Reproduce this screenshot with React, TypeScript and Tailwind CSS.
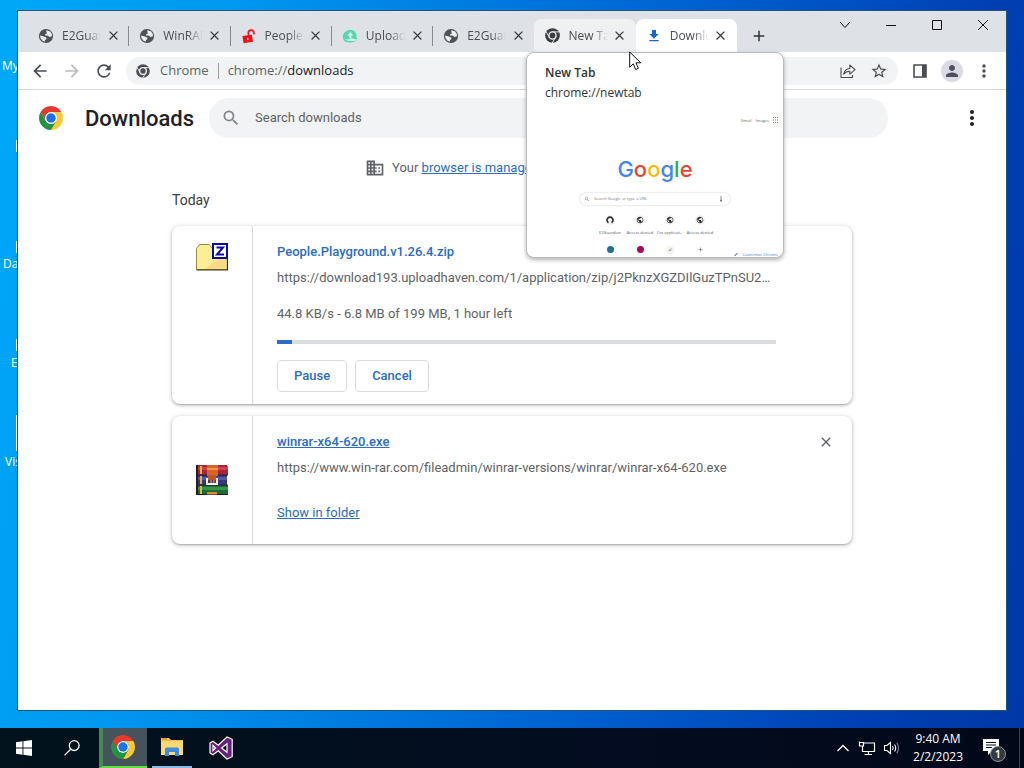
import React from "react";
import {
  MdArrowBack,
  MdArrowForward,
  MdRefresh,
  MdSearch,
  MdDomain,
  MdPerson,
  MdMoreVert,
  MdStarBorder,
  MdPublic,
  MdFileDownload,
  MdClose,
  MdAdd,
} from "react-icons/md";

const UI = "font-['Open_Sans','Noto_Sans',sans-serif]";

function ChromeLogo({ className }: { className?: string }) {
  return (
    <svg viewBox="0 0 48 48" className={className} aria-hidden="true">
      <circle cx="24" cy="24" r="12" fill="#fff" />
      <path fill="#e33b2e" d="M24 12H44.78A24 24 0 0 0 3.22 12L13.6 30A12 12 0 0 1 24 12Z" />
      <path fill="#fcc934" d="M34.4 30L24 48A24 24 0 0 0 44.78 12H24A12 12 0 0 1 34.4 30Z" />
      <path fill="#229342" d="M13.6 30L3.22 12A24 24 0 0 0 24 48L34.4 30A12 12 0 0 1 13.6 30Z" />
      <circle cx="24" cy="24" r="9.5" fill="#1a73e8" />
    </svg>
  );
}

function MonoChromeLogo({ className }: { className?: string }) {
  return (
    <svg viewBox="0 0 48 48" className={className} aria-hidden="true">
      <circle cx="24" cy="24" r="23.5" fill="currentColor" />
      <path d="M24 12.5H46M14 29.8L3 11M34 29.8L23 48" stroke="#f1f3f4" strokeWidth="3" fill="none" />
      <circle cx="24" cy="24" r="11.5" fill="currentColor" stroke="#f1f3f4" strokeWidth="4.5" />
    </svg>
  );
}

function GlobeIcon() {
  return (
    <svg viewBox="0 0 16 16" className="size-4" aria-hidden="true">
      <circle cx="8" cy="8" r="7.1" fill="#4f5256" />
      <path d="M8.6 2.3L12.3 3.4L14 6.6L13.6 8.4L11.4 8.9L9.8 7.5L7.6 7.8L7 6.4L9 5.2L8.2 3.8Z" fill="#eceef0" />
      <path d="M2.1 7.4L5.2 8.2L7.8 9.2L8.6 10.8L7 12.2L6.6 13.7L4.2 12.5L2.4 10.1Z" fill="#eceef0" />
    </svg>
  );
}

function UnlockIcon() {
  return (
    <svg viewBox="0 0 16 16" className="size-4" aria-hidden="true">
      <path d="M7.6 7.6L7.3 4.6A2.8 2.8 0 0 1 12.8 4.2L13.2 6.4" fill="none" stroke="#ee1018" strokeWidth="1.7" />
      <path d="M1.4 8.1L10.8 6.7L12 13.8L2.6 15.2Z" fill="#ee1018" />
      <path d="M6.1 9.8L7.1 9.6L7.5 12L6.5 12.2Z" fill="#fff" />
    </svg>
  );
}

function UploadHavenIcon() {
  return (
    <svg viewBox="0 0 16 16" className="size-4" aria-hidden="true">
      <path d="M2 13Q-.5 8 2.5 4.5Q6 .8 11 2.2Q14.5 4 14.4 8L15 11.5Q13 14.6 8 14.4Q4 14.4 2 13Z" fill="#54d8ae" />
      <path d="M8.4 4L11.2 7.4H9.4V10.6H7.4V7.4H5.6Z" fill="#eafff7" />
      <path d="M2 10.5Q6 12.8 9.5 10.2L15 11.5Q13 14 8.5 12.8Q4.5 13.4 2 10.5Z" fill="#c9f6e7" />
    </svg>
  );
}

type TabInfo = { title: string; icon: React.ReactNode; state?: "hover" | "active"; divider?: boolean };

const tabs: TabInfo[] = [
  { title: "E2Guardian", icon: <GlobeIcon />, divider: true },
  { title: "WinRAR download", icon: <GlobeIcon />, divider: true },
  { title: "People Playground", icon: <UnlockIcon />, divider: true },
  { title: "UploadHaven", icon: <UploadHavenIcon />, divider: true },
  { title: "E2Guardian", icon: <GlobeIcon /> },
  { title: "New Tab", icon: <MonoChromeLogo className="size-[15px] text-[#3a3d41]" />, state: "hover" },
  { title: "Downloads", icon: <MdFileDownload className="size-[18px] text-[#1a66d6]" />, state: "active" },
];

function Tab({ tab }: { tab: TabInfo }) {
  const shade =
    tab.state === "active" ? "bg-white rounded-t-lg" : tab.state === "hover" ? "bg-[#eef0f1] rounded-t-lg" : "";
  return (
    <div className={`relative flex min-w-0 flex-1 items-center pl-[10px] pr-2 ${shade}`}>
      <span className="flex w-4 shrink-0 justify-center">{tab.icon}</span>
      <span className="ml-2 min-w-0 flex-1 overflow-hidden whitespace-nowrap text-[12px] text-[#4a4d51] [mask-image:linear-gradient(to_right,black_60%,transparent)]">
        {tab.title}
      </span>
      <button aria-label={`Close ${tab.title}`} className="ml-1 flex size-4 shrink-0 items-center justify-center text-[#3c4043]">
        <MdClose className="size-[15px]" />
      </button>
      {tab.divider && <span className="absolute right-0 h-5 w-px bg-[#86898d]" />}
    </div>
  );
}

function TabStrip() {
  return (
    <header className="flex h-[41px] shrink-0 justify-between bg-[#dee1e6]">
      <div className="flex min-w-0 pl-[10px] pt-2">
        <div className="flex w-[709px] min-w-0">
          {tabs.map((t, i) => (
            <Tab key={i} tab={t} />
          ))}
        </div>
        <button aria-label="New tab" className="ml-3 flex w-5 items-center justify-center text-[#303337]">
          <MdAdd className="size-[18px]" />
        </button>
      </div>
      <div className="flex h-7 text-[#111]">
        <button aria-label="Search tabs" className="flex w-[46px] items-center justify-center">
          <svg viewBox="0 0 12 12" className="size-3"><path d="M1 3L6 8.5L11 3" fill="none" stroke="currentColor" /></svg>
        </button>
        <button aria-label="Minimize" className="flex w-[46px] items-center justify-center">
          <svg viewBox="0 0 12 12" className="size-3"><path d="M1 6.5H11" stroke="currentColor" /></svg>
        </button>
        <button aria-label="Maximize" className="flex w-[46px] items-center justify-center">
          <svg viewBox="0 0 12 12" className="size-3"><path d="M1.5 1.5H10.5V10.5H1.5Z" fill="none" stroke="currentColor" /></svg>
        </button>
        <button aria-label="Close" className="flex w-[46px] items-center justify-center">
          <svg viewBox="0 0 12 12" className="size-3"><path d="M1 1L11 11M11 1L1 11" stroke="currentColor" /></svg>
        </button>
      </div>
    </header>
  );
}

function Toolbar() {
  return (
    <div className="flex h-[38px] shrink-0 items-center border-b border-[#d6d8db] bg-white pl-3 pr-3 text-[#4a4d51]">
      <div className="flex gap-3">
        <button aria-label="Back"><MdArrowBack className="size-5" /></button>
        <button aria-label="Forward" className="text-[#babcbe]"><MdArrowForward className="size-5" /></button>
        <button aria-label="Reload"><MdRefresh className="size-5" /></button>
      </div>
      <div className="ml-3 flex h-7 min-w-0 flex-1 items-center rounded-full bg-[#f1f3f4] px-[10px]">
        <MonoChromeLogo className="size-[14px] shrink-0" />
        <span className="ml-[10px] text-[13px] text-[#5f6368]">Chrome</span>
        <span className="mx-[9px] h-4 w-px bg-[#9a9da1]" />
        <span className="flex-1 text-[13px] text-[#5f6368]">
          chrome://<span className="text-[#202124]">downloads</span>
        </span>
        <button aria-label="Share this page" className="mr-[14px]">
          <svg viewBox="0 0 16 16" className="size-4" fill="none" stroke="currentColor" strokeWidth="1.1">
            <path d="M1 4.5V14.5H12.5V12M3.8 11.2C4.3 7.6 6.4 5.6 9.8 5.5V2L15 6.7L9.8 11.2V8.2C7 8.2 5.2 9.1 3.8 11.2Z" strokeLinejoin="round" />
          </svg>
        </button>
        <button aria-label="Bookmark this tab"><MdStarBorder className="size-[18px]" /></button>
      </div>
      <button aria-label="Side panel" className="ml-[15px]">
        <svg viewBox="0 0 14 14" className="size-[14px]"><path d="M1 1H13V13H1Z" fill="none" stroke="currentColor" strokeWidth="1.6" /><path d="M9 1H13V13H9Z" fill="currentColor" /></svg>
      </button>
      <button aria-label="Profile" className="ml-[14px] flex size-[22px] items-center justify-center rounded-full bg-[#d9dae3] text-[#4b4f60]">
        <MdPerson className="size-[18px]" />
      </button>
      <button aria-label="Customize and control" className="ml-[11px]"><MdMoreVert className="size-5" /></button>
    </div>
  );
}

function ZipIcon() {
  return (
    <svg viewBox="0 0 32 32" className="size-8" aria-hidden="true">
      <path d="M.5 27.5V6.5L3.5 2.5H13L16.5 6.5H31.5V27.5Z" fill="#fbee94" stroke="#9b8a45" />
      <path d="M8 27L31 11V27Z" fill="#f7cf7a" opacity=".6" />
      <path d="M.5 28H31.5V10" fill="none" stroke="#3a3010" strokeWidth="1.2" />
      <path d="M17 2H31V16H17Z" fill="#fff" stroke="#0a0aa8" strokeWidth="2" />
      <path d="M20.5 5.5H27L21 12.5H28" fill="none" stroke="#0a0aa8" strokeWidth="2" />
    </svg>
  );
}

function WinrarIcon() {
  return (
    <svg viewBox="0 0 32 32" className="size-8" aria-hidden="true">
      <path d="M1 1H31L32 3V11H1Z" fill="#a8263a" />
      <path d="M1 3H32V6H1Z" fill="#cf3f50" />
      <path d="M0 11H31V21H0Z" fill="#34387f" />
      <path d="M0 13H31V16H0Z" fill="#5257a8" />
      <path d="M1 21H32V31H1Z" fill="#1c6a34" />
      <path d="M1 23H32V26H1Z" fill="#35934a" />
      <path d="M1 10.5H32V11.5H1ZM1 20.5H32V21.5H1ZM1 30H32V31H1Z" fill="#241a38" />
      <path d="M0 1H2V31H0Z" fill="#2c1b2c" />
      <path d="M4 2H6V10H4ZM4 12H6V20H4ZM4 22H6V30H4Z" fill="#e8b33f" />
      <path d="M11 1H22V12H11Z" fill="#d5662a" />
      <path d="M11 4H22V6H11Z" fill="#f09445" />
      <path d="M10 14H12V19H14V16H15.500V19H17.500V16H19V19H20V14H22V21H10Z" fill="#f5efe6" />
      <path d="M12 11H20V16H19V19H17.500V15.500H15.500V19H14V16H12Z" fill="#c4571f" />
      <path d="M11 28H21V30.500H11Z" fill="#e08a2e" />
    </svg>
  );
}

function DownloadCard({ icon, children }: { icon: React.ReactNode; children: React.ReactNode }) {
  return (
    <article className="flex rounded-lg bg-white shadow-[0_1px_2px_rgba(60,64,67,0.35),0_1px_4px_1px_rgba(60,64,67,0.18)]">
      <div className="flex w-[81px] shrink-0 justify-center border-r border-[#d9d9d9]">{icon}</div>
      <div className="relative min-w-0 flex-1 pl-6 pr-[76px] text-[13px] leading-5">{children}</div>
    </article>
  );
}

function DownloadsPage() {
  return (
    <main className="min-h-0 flex-1 bg-white font-['Roboto',sans-serif] text-[#5f6368]">
      <div className="flex h-14 items-center pl-[21px] pr-[22px]">
        <ChromeLogo className="size-6 shrink-0" />
        <h1 className="ml-[22px] text-[22px] font-medium text-[#202124]">Downloads</h1>
        <label className="ml-[15px] flex h-10 w-[679px] min-w-0 items-center rounded-full bg-[#f1f3f4] pl-3">
          <MdSearch className="size-5 shrink-0 text-[#80868b]" />
          <input
            type="search"
            aria-label="Search downloads"
            placeholder="Search downloads"
            className="ml-[14px] min-w-0 flex-1 bg-transparent text-[13px] outline-none placeholder:text-[#5f6368]"
          />
        </label>
        <button aria-label="More actions" className="ml-auto text-[#202124]"><MdMoreVert className="size-6" /></button>
      </div>
      <div className="mx-auto w-full max-w-[680px]">
        <p className="flex items-center justify-center pt-3 text-[13px] leading-5">
          <MdDomain className="mr-[7px] size-5" />
          <span>
            Your <a href="#managed" className="text-[#2a6cc8] underline">browser is managed</a> by your organization
          </span>
        </p>
        <h2 className="mb-4 mt-3 text-[14px] leading-5 text-[#3c4043]">Today</h2>
        <div className="flex flex-col gap-3">
          <DownloadCard icon={<div className="pt-4"><ZipIcon /></div>}>
            <div className="pb-3 pt-4">
              <h3 className="font-medium text-[#2a6cc8]">People.Playground.v1.26.4.zip</h3>
              <p className="mt-[6px] truncate">
                https://download193.uploadhaven.com/1/application/zip/j2PknzXGZDIlGuzTPnSU2TqLwe8RcVb/file
              </p>
              <p className="mt-4">44.8 KB/s - 6.8 MB of 199 MB, 1 hour left</p>
              <div className="mt-4 h-1 bg-[#dadce0]" role="progressbar" aria-valuenow={3} aria-label="Download progress">
                <div className="h-1 w-[3%] bg-[#2a6cc8]" />
              </div>
              <div className="mt-4 flex gap-2 font-medium text-[#2a6cc8]">
                <button className="h-8 rounded border border-[#dadce0] px-4">Pause</button>
                <button className="h-8 rounded border border-[#dadce0] px-4">Cancel</button>
              </div>
            </div>
          </DownloadCard>
          <DownloadCard icon={<div className="flex items-center"><WinrarIcon /></div>}>
            <div className="pb-[21px] pt-4">
              <a href="#winrar" className="font-medium text-[#2a6cc8] underline">winrar-x64-620.exe</a>
              <p className="mt-[6px]">https://www.win-rar.com/fileadmin/winrar-versions/winrar/winrar-x64-620.exe</p>
              <a href="#folder" className="mt-[25px] inline-block text-[#2a6cc8] underline">Show in folder</a>
              <button aria-label="Remove from list" className="absolute right-[18px] top-[18px]">
                <MdClose className="size-4" />
              </button>
            </div>
          </DownloadCard>
        </div>
      </div>
    </main>
  );
}

const shortcuts = [
  { label: "E2Guardian", glyph: "ring" },
  { label: "Access denied", glyph: "globe" },
  { label: "Crx applicati…", glyph: "globe" },
  { label: "Access denied", glyph: "globe" },
];

function TabPreview() {
  return (
    <div className="absolute left-[526px] top-[52px] h-[206px] w-[258px] overflow-hidden rounded-lg border border-[#b9bbbe] bg-white text-[12px] text-[#303336] shadow-[0_2px_4px_rgba(0,0,0,0.3)]">
      <p className="mt-[10px] pl-[18px] font-semibold leading-5">New Tab</p>
      <p className="pl-[18px] leading-5">chrome://newtab</p>
      <div className="mt-[14px] flex justify-end gap-1 pr-1 text-[4px] leading-[8px] text-[#666]">
        <span>Gmail</span>
        <span>Images</span>
        <svg viewBox="0 0 6 6" className="size-[6px]"><path d="M0 .5H6M0 3H6M0 5.5H6" stroke="#777" strokeDasharray="1 1" /></svg>
      </div>
      <p className="mt-7 text-center font-['Inter',sans-serif] text-[22px] font-medium leading-8">
        <span className="text-[#4285f4]">G</span>
        <span className="text-[#ea4335]">o</span>
        <span className="text-[#fbbc05]">o</span>
        <span className="text-[#4285f4]">g</span>
        <span className="text-[#34a853]">l</span>
        <span className="text-[#ea4335]">e</span>
      </p>
      <div className="mx-auto mt-2 flex h-3 w-[150px] items-center rounded-full px-1 text-[4px] text-[#777] shadow-[0_0_2px_rgba(0,0,0,0.25)]">
        <MdSearch className="mr-1 size-[6px]" />
        <span className="flex-1">Search Google or type a URL</span>
        <svg viewBox="0 0 4 6" className="mr-[3px] h-[6px] w-1"><path d="M2 0V4M1 4.5H3M2 4V6" stroke="#555" strokeWidth=".7" fill="none" /></svg>
      </div>
      <div className="mx-auto mt-[10px] grid w-[120px] grid-cols-4 justify-items-center text-[4px] leading-[6px] text-[#555]">
        {shortcuts.map((s, i) => (
          <span key={i} className="flex flex-col items-center gap-[5px] whitespace-nowrap">
            <span className="flex size-[10px] items-center justify-center rounded-full bg-[#f1f3f4] text-[#333]">
              {s.glyph === "ring" ? (
                <svg viewBox="0 0 8 8" className="size-2"><path d="M2.5 6.7A3 3 0 1 1 5.5 6.7" fill="none" stroke="currentColor" strokeWidth="1.7" /></svg>
              ) : (
                <MdPublic className="size-2" />
              )}
            </span>
            {s.label}
          </span>
        ))}
        <span className="mt-[10px] size-[7px] rounded-full bg-[#1d7195]" />
        <span className="mt-[10px] size-[7px] rounded-full bg-[#a5075e]" />
        <span className="mt-[10px] flex size-2 items-center justify-center rounded-full bg-[#f1f3f4]">al</span>
        <MdAdd className="mt-[10px] size-[7px]" />
      </div>
      <div className="absolute bottom-0 right-[5px] flex items-center gap-1 text-[4px] leading-[5px] text-[#3b78e7]">
        <span className="h-px w-1 -rotate-45 bg-[#3b78e7]" />
        Customize Chrome
      </div>
    </div>
  );
}

function Taskbar() {
  return (
    <footer className="flex h-10 shrink-0 justify-between bg-[linear-gradient(to_right,#02131d,#030c20_60%,#020818)] text-white">
      <div className="flex">
        <button aria-label="Start" className="flex w-12 items-center justify-center">
          <svg viewBox="0 0 16 16" className="size-4" fill="#fff"><path d="M0 2.2L6.5 1.3V7.5H0ZM7.4 1.2L16 0V7.5H7.4ZM0 8.4H6.5V14.7L0 13.8ZM7.4 8.4H16V16L7.4 14.8Z" /></svg>
        </button>
        <button aria-label="Search" className="flex w-12 items-center justify-center">
          <svg viewBox="0 0 16 16" className="size-4" fill="none" stroke="#fff" strokeWidth="1.3"><circle cx="10.2" cy="5.6" r="4.9" /><path d="M6.7 9.2L.5 15.4" /></svg>
        </button>
        <button aria-label="Google Chrome" className="ml-[3px] flex w-12 items-center justify-center border-b-2 border-l-4 border-b-[#62dd43] border-l-[#478a55] bg-[#47535c] pr-1">
          <ChromeLogo className="size-6" />
        </button>
        <button aria-label="File Explorer" className="ml-[5px] flex w-10 items-center justify-center border-b-2 border-[#86b9e8]">
          <svg viewBox="0 0 22 18" className="h-[18px] w-[22px]">
            <path d="M0 0H8L10 2H22V17H0Z" fill="#f0bd4c" />
            <path d="M0 3H22V17H0Z" fill="#fbd975" />
            <path d="M1 0H6V2H1Z" fill="#e99a2b" />
            <path d="M4 18V11Q4 9.5 5.5 9.5H16.5Q18 9.5 18 11V18H14V14H8V18Z" fill="#3d8edb" />
          </svg>
        </button>
        <button aria-label="Visual Studio" className="flex w-[58px] items-center justify-center">
          <svg viewBox="0 0 24 24" className="size-6" fillRule="evenodd">
            <path d="M1 7L4 5.2L9.2 9.3L18 1L23.2 3.3V20.7L18 23L9.2 14.7L4 18.8L1 17ZM4 9.5V14.5L6.6 12ZM12.6 12L18 16.2V7.8Z" fill="#68217a" stroke="#fff" strokeWidth="1.2" />
          </svg>
        </button>
      </div>
      <div className="flex items-center">
        <button aria-label="Show hidden icons" className="mr-2">
          <svg viewBox="0 0 14 14" className="size-[14px]"><path d="M1.5 10L7 4.5L12.5 10" fill="none" stroke="#fff" strokeWidth="1.3" /></svg>
        </button>
        <svg viewBox="0 0 18 16" className="mr-[7px] h-4 w-[18px]" fill="none" stroke="#fff" strokeWidth="1.2"><path d="M6 3H16.5V11.5H4.5V6M1.5 2.5H5.5V6H1.5ZM1.5 1.5V4M10.5 11.5V14.5M6.5 14.5H14" /></svg>
        <svg viewBox="0 0 18 16" className="mr-3 h-4 w-[18px]" fill="none" stroke="#fff" strokeWidth="1.1"><path d="M1.5 5.5H4L7.5 2.5V13.5L4 10.5H1.5ZM9.5 6Q11 8 9.5 10M11.5 4.5Q14 8 11.5 11.5" /><path d="M13.8 2.8Q17.3 8 13.8 13.2" stroke="#7d848e" /></svg>
        <div className="text-center text-[12px] leading-[18px] font-['Open_Sans',sans-serif]">
          <p>9:40 AM</p>
          <p>2/2/2023</p>
        </div>
        <button aria-label="Notifications" className="relative ml-5 mr-3 h-6 w-6">
          <svg viewBox="0 0 24 24" className="size-6" aria-hidden="true">
            <path d="M0 3H16V15H9L5 19V15H0Z" fill="#fff" />
            <path d="M3 6.5H13M3 9H13M3 11.5H9" stroke="#06101f" />
          </svg>
          <span className="absolute left-[7px] top-[10px] flex size-4 items-center justify-center rounded-full border border-[#8a8f96] bg-[#343a42] text-[11px] font-semibold">1</span>
        </button>
        <span className="mr-1 h-10 w-px bg-[#39414f]" />
      </div>
    </footer>
  );
}

export default function App() {
  return (
    <div className={`relative flex h-screen min-h-[600px] flex-col overflow-hidden bg-[linear-gradient(100deg,#00a8f8_0%,#0098f0_20%,#0068d6_55%,#0040b4_85%,#0038a6_100%)] ${UI}`}>
      <div className="absolute left-0 top-0 w-10 text-[12px] leading-4 text-white">
        <span className="absolute left-[2px] top-[58px]">My</span>
        <span className="absolute left-[16px] top-[140px] h-3 w-1 bg-white" />
        <span className="absolute left-[16px] top-[241px] h-3 w-1 bg-white" />
        <span className="absolute left-[3px] top-[256px]">Data</span>
        <span className="absolute left-[16px] top-[339px] h-3 w-1 bg-white" />
        <span className="absolute left-[11px] top-[355px]">E2</span>
        <span className="absolute left-[16px] top-[415px] h-9 w-1 bg-white" />
        <span className="absolute left-[5px] top-[454px]">Visual</span>
      </div>
      <div className="relative flex min-h-0 flex-1 flex-col px-[17px] pb-[17px] pt-[10px]">
        <section aria-label="Google Chrome" className="flex min-h-0 flex-1 flex-col overflow-hidden border border-[#1f5577] bg-white">
          <TabStrip />
          <Toolbar />
          <DownloadsPage />
        </section>
      </div>
      <TabPreview />
      <svg viewBox="0 0 13 20" className="absolute left-[629px] top-[51px] h-5 w-[13px]" aria-hidden="true">
        <path d="M.7 1V16.2L4.3 12.8L6.7 18.5L9.4 17.4L7 11.8H11.8Z" fill="#fff" stroke="#111" />
      </svg>
      <Taskbar />
    </div>
  );
}
